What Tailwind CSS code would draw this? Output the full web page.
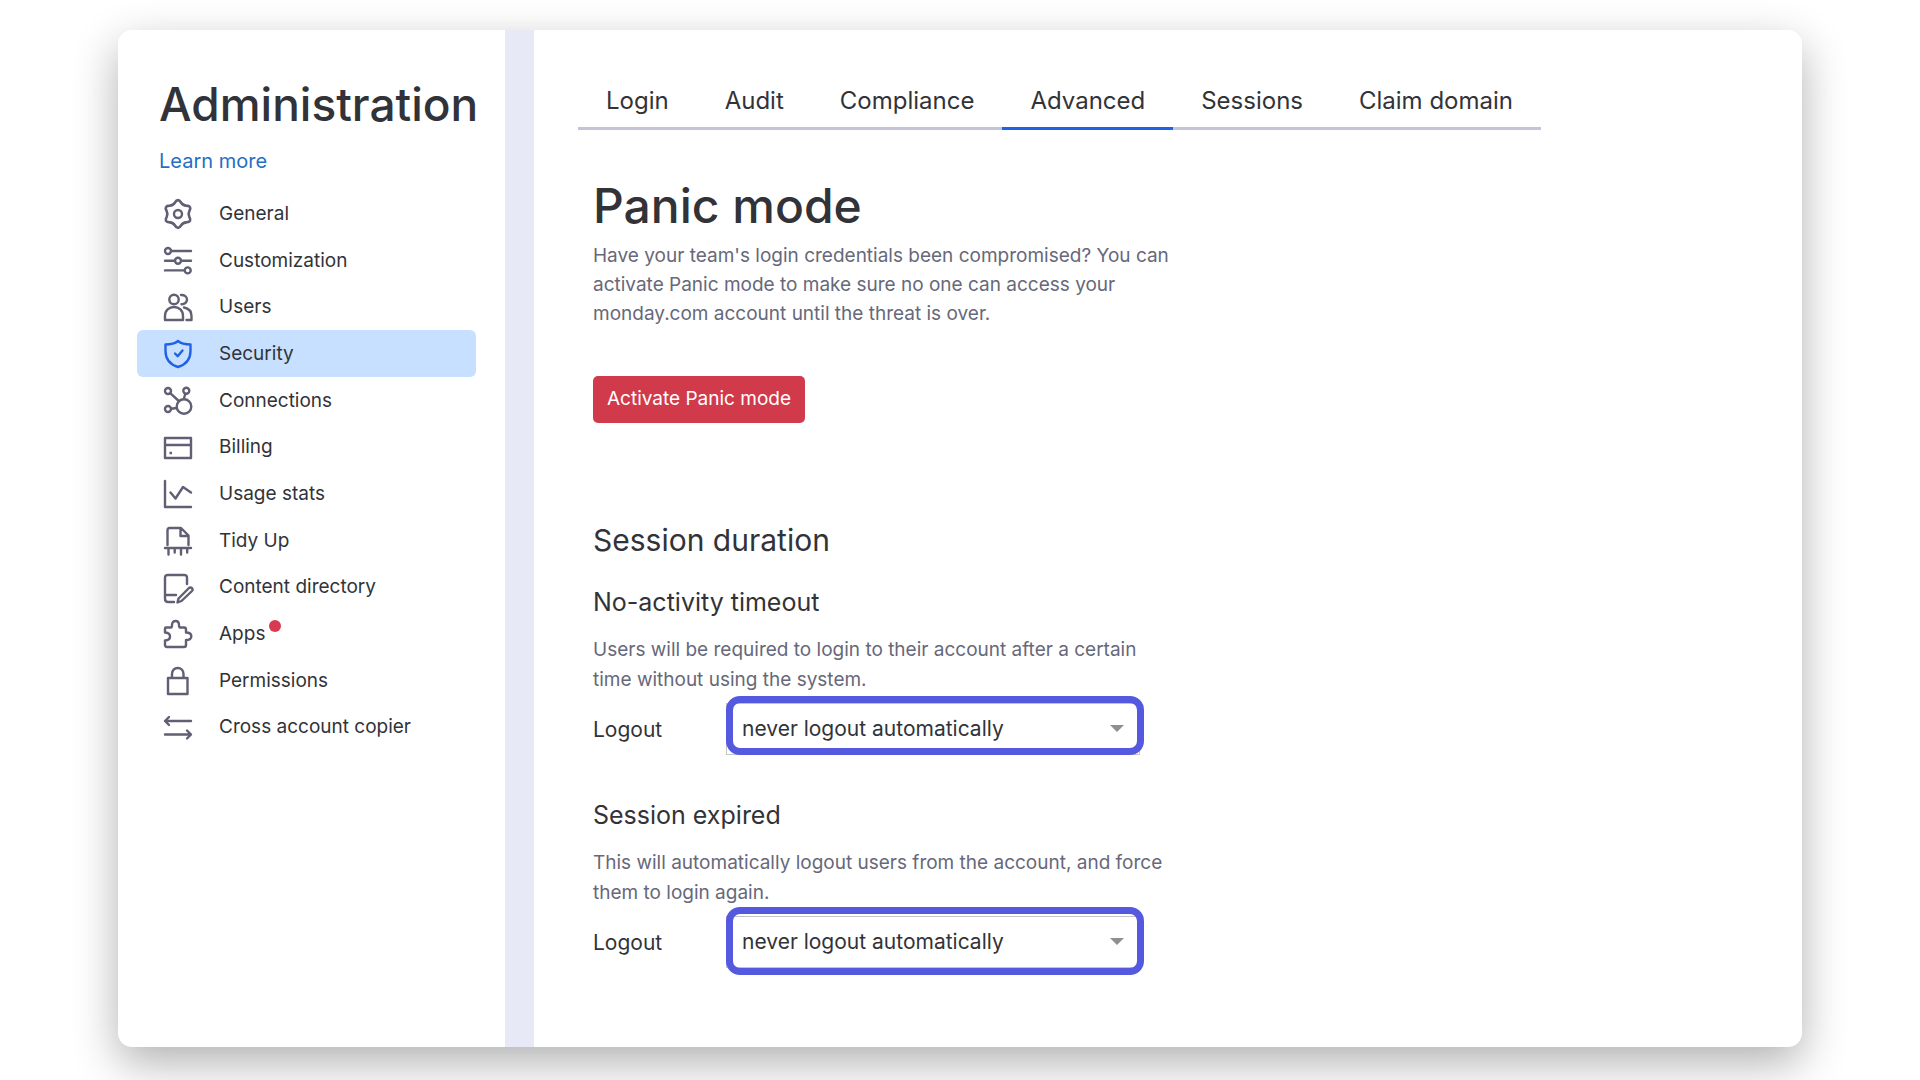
<!DOCTYPE html>
<html lang="en">

<head>
	<meta charset="utf-8">
	<title>Administration</title>
	<meta name="viewport" content="width=device-width, initial-scale=1">
	<script src="https://cdn.jsdelivr.net/npm/@tailwindcss/browser@4"></script>
</head>

<body class="min-h-screen flex bg-white px-[118px] pt-[30px] pb-[33px] font-['Inter','Liberation_Sans',sans-serif] text-[#323338]">
	<div class="flex flex-1 overflow-hidden rounded-[14px] bg-white shadow-[0_16px_45px_rgba(0,0,0,0.31)]">
		<aside class="w-[387px] shrink-0 pl-[19px] pr-[29px] pt-[46px]">
			<h1 class="pl-[22px] text-[46px] leading-[56px] font-medium whitespace-nowrap">Administration</h1>
			<a href="#" class="mt-[14px] ml-[22px] block w-fit text-[20px] leading-[30px] text-[#1f6fc4]">Learn more</a>
			<nav class="mt-[14px] grid grid-rows-12 h-[560px] text-[19px]">
				<a href="#" class="flex items-center gap-[27px] rounded-md pl-[27px] pt-[2px]">
					<svg class="size-7 shrink-0 overflow-visible text-[#605f73]" viewBox="0 0 28 28" fill="none" stroke="currentColor" stroke-width="2.4" stroke-linejoin="round">
						<path d="M11.1 3.8Q14-1 16.9 3.8Q18.5 6.2 21.4 6.4Q27 6.5 24.3 11.4Q23 14 24.3 16.6Q27 21.5 21.4 21.6Q18.5 21.8 16.9 24.2Q14 29 11.1 24.2Q9.5 21.8 6.6 21.6Q1 21.5 3.7 16.6Q5 14 3.7 11.4Q1 6.5 6.6 6.4Q9.5 6.2 11.1 3.8Z" transform="translate(-1.400 -1.400) scale(1.100)" />
						<circle cx="14" cy="14" r="4" />
					</svg>
					General
				</a>
				<a href="#" class="flex items-center gap-[27px] rounded-md pl-[27px] pt-[2px]">
					<svg class="size-7 shrink-0 overflow-visible text-[#605f73]" viewBox="0 0 28 28" fill="none" stroke="currentColor" stroke-width="2.4" stroke-linecap="round">
						<circle cx="4" cy="4" r="3" />
						<path d="M7 4H27M1 13.7H11M17 13.7H27M1 23.4H20.5" />
						<circle cx="14" cy="13.7" r="3" />
						<circle cx="23.7" cy="23.4" r="3" />
					</svg>
					Customization
				</a>
				<a href="#" class="flex items-center gap-[27px] rounded-md pl-[27px] pt-[2px]">
					<svg class="size-7 shrink-0 overflow-visible text-[#605f73]" viewBox="0 0 28 28" fill="none" stroke="currentColor" stroke-width="2.4" stroke-linecap="round" stroke-linejoin="round">
						<circle cx="10" cy="5.5" r="4.7" />
						<path d="M1 26V22C1 16.500 5 13 10 13S19 16.500 19 22V26Z" />
						<path d="M17 1C20.500 .8 23 2.800 23 5.600S20.500 10.400 17.500 10.200M20 13.500C25 14.500 27.500 18 27.500 22V26H22.500" />
					</svg>
					Users
				</a>
				<a href="#" aria-current="page" class="flex items-center gap-[27px] rounded-md bg-[#c7e0ff] pl-[27px] pt-[2px]">
					<svg class="size-7 shrink-0 overflow-visible text-[#1f62e8]" viewBox="0 0 28 28" fill="none" stroke="currentColor" stroke-width="2.4" stroke-linecap="round" stroke-linejoin="round">
						<path d="M14 1C11 3.500 6 4.500 1.500 4.500V11C1.500 19 6 24.500 14 27C22 24.500 26.500 19 26.500 11V4.500C22 4.500 17 3.500 14 1Z" />
						<path d="M11 13.500L13.700 16.200L18.500 10.500" />
					</svg>
					Security
				</a>
				<a href="#" class="flex items-center gap-[27px] rounded-md pl-[27px] pt-[2px]">
					<svg class="size-7 shrink-0 overflow-visible text-[#605f73]" viewBox="0 0 28 28" fill="none" stroke="currentColor" stroke-width="2.4">
						<circle cx="4" cy="4" r="3" />
						<circle cx="22.300" cy="3.700" r="3" />
						<circle cx="4" cy="22" r="3" />
						<circle cx="20" cy="19.500" r="7.300" />
						<path d="M6.200 6.200L14.800 14M21.400 6.600L19.800 12M7 21.700L12.800 21" />
					</svg>
					Connections
				</a>
				<a href="#" class="flex items-center gap-[27px] rounded-md pl-[27px] pt-[2px]">
					<svg class="size-7 shrink-0 overflow-visible text-[#605f73]" viewBox="0 0 28 28" fill="none" stroke="currentColor" stroke-width="2.4" stroke-linejoin="round">
						<path d="M1 4H27V24H1ZM1 11H27M5.500 19H8" />
					</svg>
					Billing
				</a>
				<a href="#" class="flex items-center gap-[27px] rounded-md pl-[27px] pt-[2px]">
					<svg class="size-7 shrink-0 overflow-visible text-[#605f73]" viewBox="0 0 28 28" fill="none" stroke="currentColor" stroke-width="2.4" stroke-linecap="round" stroke-linejoin="round">
						<path d="M1 1V27H27" />
						<path d="M6.500 12.500L11.500 18.500L19 7L27 12.500" />
					</svg>
					Usage stats
				</a>
				<a href="#" class="flex items-center gap-[27px] rounded-md pl-[27px] pt-[2px]">
					<svg class="size-7 shrink-0 overflow-visible text-[#605f73]" viewBox="0 0 28 28" fill="none" stroke="currentColor" stroke-width="2.4" stroke-linecap="round" stroke-linejoin="round">
						<path d="M3.500 18V3Q3.500 1 5.500 1H17L24.500 8.500V18M16.500 1.500V9H24" />
						<path d="M1 21H27M4.500 21V27.500M10.700 21V25.500M17 21V27.500M23.200 21V25.500" />
					</svg>
					Tidy Up
				</a>
				<a href="#" class="flex items-center gap-[27px] rounded-md pl-[27px] pt-[2px]">
					<svg class="size-7 shrink-0 overflow-visible text-[#605f73]" viewBox="0 0 28 28" fill="none" stroke="currentColor" stroke-width="2.4" stroke-linecap="round" stroke-linejoin="round">
						<path d="M23 10V4Q23 1 20 1H4Q1 1 1 4V24.500Q1 28 4 28H10M1 21H12" />
						<path d="M13.500 28.500L14.500 24.500L25 14Q26.500 12.800 28 14.200Q29.200 15.800 28 17L17.500 27Z" />
					</svg>
					Content directory
				</a>
				<a href="#" class="flex items-center gap-[27px] rounded-md pl-[27px] pt-[2px]">
					<svg class="size-7 shrink-0 overflow-visible text-[#605f73]" viewBox="0 0 28 28" fill="none" stroke="currentColor" stroke-width="2.4" stroke-linejoin="round">
						<path d="M2 7.500H7C8 7.500 8 7 8 5C8 2.500 9.500 1 11.500 1S15 2.500 15 5C15 7 15 7.500 16 7.500H20Q22 7.500 22 9.500V12.500C26 12.500 27.300 14.200 27.300 16.200S26 20 22 20V25Q22 27 20 27H3Q1 27 1 25V20.500C5 20.500 6 18.500 6 16.500S5 12.500 1 12.500V8.500Q1 7.500 2 7.500Z" />
					</svg>
					<span class="flex gap-1">Apps <span class="size-3 rounded-full bg-[#d83a52]"></span></span>
				</a>
				<a href="#" class="flex items-center gap-[27px] rounded-md pl-[27px] pt-[2px]">
					<svg class="size-7 shrink-0 overflow-visible text-[#605f73]" viewBox="0 0 28 28" fill="none" stroke="currentColor" stroke-width="2.4" stroke-linejoin="round">
						<path d="M4 11H23.500V27H4ZM8 11V7C8 3.500 10.500 1 13.700 1S19.500 3.500 19.500 7V11" />
					</svg>
					Permissions
				</a>
				<a href="#" class="flex items-center gap-[27px] rounded-md pl-[27px] pt-[2px]">
					<svg class="size-7 shrink-0 overflow-visible text-[#605f73]" viewBox="0 0 28 28" fill="none" stroke="currentColor" stroke-width="2.4" stroke-linecap="round" stroke-linejoin="round">
						<path d="M27 7H1M5 3L1 7L5 11M1 20.500H27M23 16.500L27 20.500L23 24.500" />
					</svg>
					Cross account copier
				</a>
			</nav>
		</aside>

		<div class="w-[29px] shrink-0 bg-[#e7eaf6]"></div>

		<main class="flex-1 pl-11 pt-10">
			<nav class="flex w-fit h-[60px] text-[24px] whitespace-nowrap">
				<a href="#" class="flex items-center border-b-3 border-[#c3c4d6] px-7 pt-1">Login</a>
				<a href="#" class="flex items-center border-b-3 border-[#c3c4d6] px-7 pt-1">Audit</a>
				<a href="#" class="flex items-center border-b-3 border-[#c3c4d6] px-7 pt-1">Compliance</a>
				<a href="#" aria-current="page" class="flex items-center border-b-3 border-[#1f62e8] px-7 pt-1">Advanced</a>
				<a href="#" class="flex items-center border-b-3 border-[#c3c4d6] px-7 pt-1">Sessions</a>
				<a href="#" class="flex items-center border-b-3 border-[#c3c4d6] px-7 pt-1">Claim domain</a>
			</nav>

			<div class="pl-[15px] w-[640px]">
				<section>
					<h2 class="mt-12 text-[48px] leading-[56px] font-medium">Panic mode</h2>
					<p class="mt-[7px] text-[19px] leading-[29px] text-[#676879]">
						Have your team's login credentials been compromised? You can<br>
						activate Panic mode to make sure no one can access your<br>
						monday.com account until the threat is over.
					</p>
					<button type="button" class="mt-12 h-[47px] w-[212px] rounded-[5px] bg-[#d03a4b] text-[19px] text-white whitespace-nowrap">Activate Panic mode</button>
				</section>

				<section>
					<h2 class="mt-[99px] text-[30px] leading-9">Session duration</h2>

					<h3 class="mt-7 text-[25px] leading-8">No-activity timeout</h3>
					<p class="mt-[17px] text-[19px] leading-[30px] text-[#676879]">
						Users will be required to login to their account after a certain<br>
						time without using the system.
					</p>
					<div class="mt-2 flex items-center text-[21px]">
						<label for="idle" class="w-[133px] pt-[2px]">Logout</label>
						<div class="relative w-[414px]">
							<select id="idle" class="h-[52px] w-full appearance-none border border-[#c4c4c4] bg-white pl-[15px]">
								<option>never logout automatically</option>
							</select>
							<svg class="pointer-events-none absolute right-[16px] top-[22px] h-[7px] w-[14px] text-[#8f8f8f]" viewBox="0 0 14 7" fill="currentColor"><path d="M0 0H14L7 7Z" /></svg>
							<span class="pointer-events-none absolute left-0 -top-[7px] h-[59px] w-[418px] rounded-[14px] border-7 border-[#5559df]"></span>
						</div>
					</div>

					<h3 class="mt-11 text-[25px] leading-8">Session expired</h3>
					<p class="mt-[17px] text-[19px] leading-[30px] text-[#676879]">
						This will automatically logout users from the account, and force<br>
						them to login again.
					</p>
					<div class="mt-2 flex items-center text-[21px]">
						<label for="expired" class="w-[133px] pt-[2px]">Logout</label>
						<div class="relative w-[414px]">
							<select id="expired" class="h-[52px] w-full appearance-none border border-[#c4c4c4] bg-white pl-[15px]">
								<option>never logout automatically</option>
							</select>
							<svg class="pointer-events-none absolute right-[16px] top-[22px] h-[7px] w-[14px] text-[#8f8f8f]" viewBox="0 0 14 7" fill="currentColor"><path d="M0 0H14L7 7Z" /></svg>
							<span class="pointer-events-none absolute left-0 -top-[9px] h-[68px] w-[418px] rounded-[14px] border-7 border-[#5559df]"></span>
						</div>
					</div>
				</section>
			</div>
		</main>
	</div>
</body>

</html>
